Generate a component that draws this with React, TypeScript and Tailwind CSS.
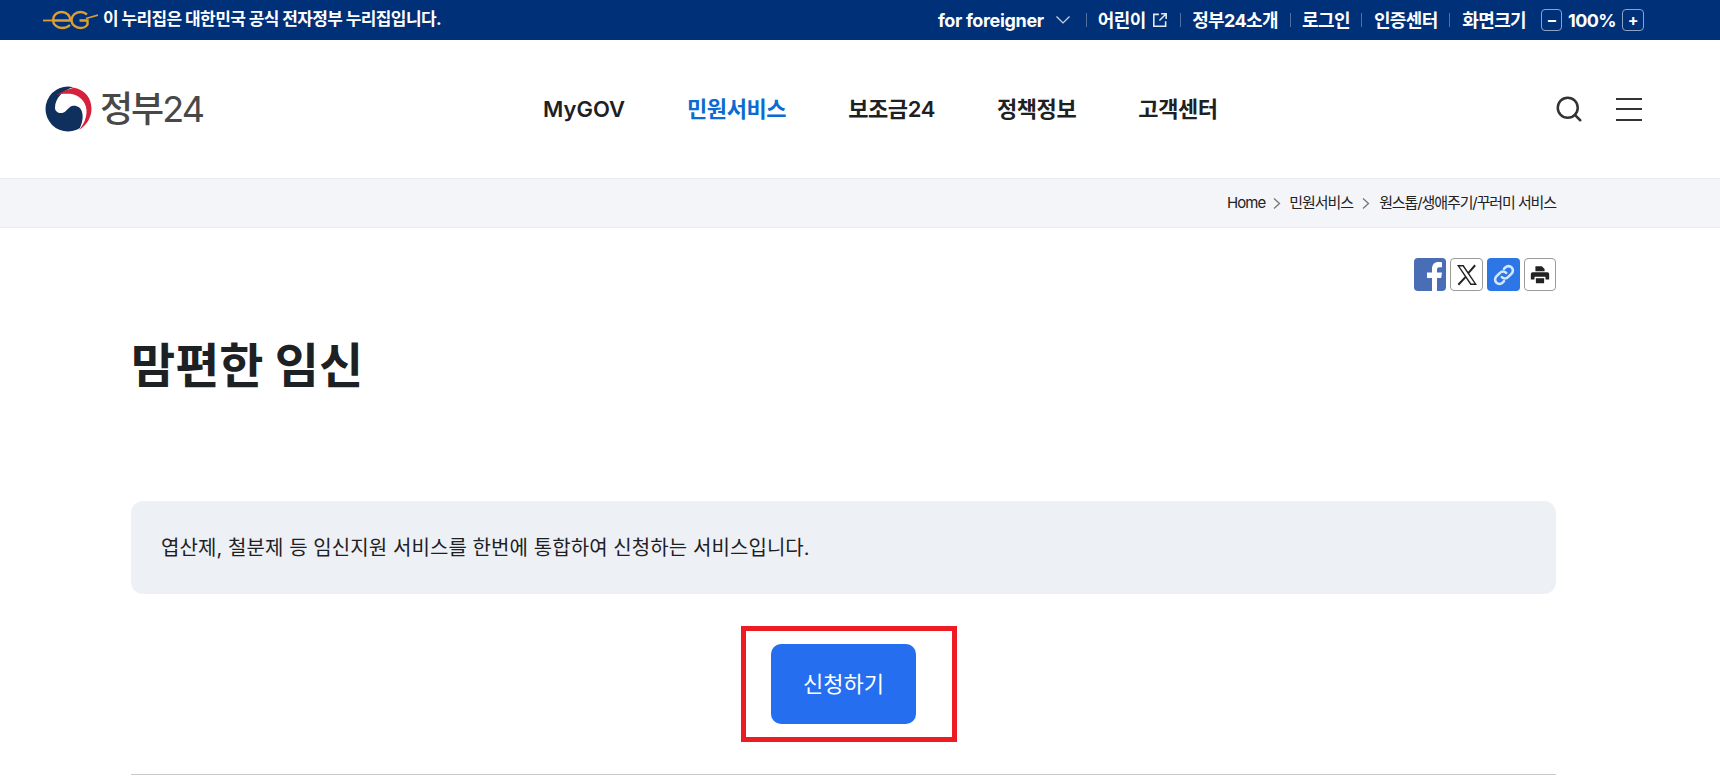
import { Search } from "lucide-react";

const FONT = "font-['Inter','Noto_Sans_CJK_KR',sans-serif]";

const UTIL_LINKS = ["정부24소개", "로그인", "인증센터"];
const NAV_ITEMS = [
  { label: "MyGOV", active: false },
  { label: "민원서비스", active: true },
  { label: "보조금24", active: false },
  { label: "정책정보", active: false },
  { label: "고객센터", active: false },
];

function EgLogo() {
  return (
    <svg width="55" height="20" viewBox="0 0 55 20" fill="none" stroke="#dd9f33" strokeWidth="2.4">
      <path d="M0 10.5h12" strokeWidth="1.8" />
      <path d="M10 10.500h17c.5-5-3.500-8.500-8.500-8.500C13.500 2 10 5.500 10 10s4 8 9 8c3 0 6-1 8-3" />
      <path d="M44 4.500C42 2.800 40 2 37.500 2 32.500 2 28.500 5.500 28.500 10s4 8 9 8c3 0 5.500-1 7-3.500v-4H36.500" />
      <path d="M43 8.500 55 5" strokeWidth="1.800" />
    </svg>
  );
}

function TaegeukLogo() {
  return (
    <svg width="47" height="46" viewBox="0 0 47 46">
      <circle cx="23" cy="23" r="22.500" fill="#0f2f5c" />
      <path d="M10 22C10 12 18 4 29 1L47 0V46H33C36 40 39 33 37 26 36 21 31 19 27 20 23 21 22 26 17 27 13 27.500 10 25 10 22Z" fill="#fff" />
      <path d="M12 9C17 5 23 3.500 29 1.800 40 4 46.500 12 46.500 23 46.500 31 42 39 34 44 39 38 42 31 41.500 24 41 15 33 8.500 25 7.800 20 7.400 16 7.800 12 9Z" fill="#d6213c" />
    </svg>
  );
}

function Chevron({ className }: { className: string }) {
  return (
    <svg className={className} viewBox="0 0 8 12" fill="none" stroke="currentColor" strokeWidth="1.300">
      <path d="M1 1.500 6.500 6.500 1 11.500" />
    </svg>
  );
}

function UtilBar() {
  return (
    <div className="flex h-10 items-center justify-between bg-[#003078] pl-[43px] pr-[76px] font-bold tracking-[-0.6px] text-white">
      <div className="flex items-center gap-[5px] text-[17px]">
        <EgLogo />
        <span>이 누리집은 대한민국 공식 전자정부 누리집입니다.</span>
      </div>
      <div className="flex items-center text-[18px]">
        <span className="tracking-[-0.35px]">for foreigner</span>
        <svg className="ml-[12px] mr-[16px]" width="14" height="8" viewBox="0 0 14 8" fill="none" stroke="#cfd8e8" strokeWidth="1.200">
          <path d="M.5.500 7 7 13.500.5" />
        </svg>
        <div className="h-[14px] w-px bg-[#51709f]" />
        <span className="ml-[11px]">어린이</span>
        <svg className="ml-[5px] mr-[11px]" width="18" height="18" viewBox="0 0 16 16" fill="none" stroke="#e3e8f1" strokeWidth="1.400">
          <path d="M7 3H2.500v10.500H13V9M9 2.500h4.500V7M13.500 2.500 7.500 8.500" />
        </svg>
        {UTIL_LINKS.map((l) => (
          <div key={l} className="flex items-center">
            <div className="h-[14px] w-px bg-[#51709f]" />
            <span className="mx-[11.5px]">{l}</span>
          </div>
        ))}
        <div className="h-[14px] w-px bg-[#51709f]" />
        <span className="ml-[12px]">화면크기</span>
        <button className="ml-[15px] flex h-[22px] w-[21px] items-center justify-center rounded-[4px] border border-[#8ea3c4] text-[16px] leading-none">−</button>
        <span className="ml-[6px]">100%</span>
        <button className="ml-[6px] flex h-[22px] w-[22px] items-center justify-center rounded-[4px] border border-[#8ea3c4] text-[16px] leading-none">+</button>
      </div>
    </div>
  );
}

function Header() {
  return (
    <header className="flex h-[138px] items-center pl-[45px] pr-[78px]">
      <div className="flex w-[498px] items-center gap-[8px]">
        <TaegeukLogo />
        <span className="text-[36px] font-medium leading-none tracking-[-2px] text-[#484848]">
          정부<span className="font-normal">24</span>
        </span>
      </div>
      <nav className="flex items-center gap-[62px] text-[22px] font-semibold tracking-[-0.4px] text-[#1e2124]">
        {NAV_ITEMS.map((n) => (
          <a key={n.label} className={n.active ? "text-[#0b6bd0]" : n.label === "MyGOV" ? "tracking-normal" : ""}>{n.label}</a>
        ))}
      </nav>
      <div className="ml-auto flex items-center gap-[32px]">
        <Search size={30} strokeWidth={2} className="text-[#333333]" />
        <div className="flex h-[23px] w-[26px] flex-col justify-between">
          <div className="h-[2px] bg-[#333333]" />
          <div className="h-[2px] bg-[#333333]" />
          <div className="h-[2px] bg-[#333333]" />
        </div>
      </div>
    </header>
  );
}

function Breadcrumb() {
  return (
    <div className="flex h-[50px] items-center justify-end border-y border-[#e8ebef] bg-[#f4f5f9] pr-[164px] text-[15px] tracking-[-1px] text-[#222222]">
      <span>Home</span>
      <Chevron className="mx-[8px] h-3 w-2 text-[#777777]" />
      <span>민원서비스</span>
      <Chevron className="mx-[9px] h-3 w-2 text-[#777777]" />
      <span className="tracking-[-1.1px]">원스톱/생애주기/꾸러미 서비스</span>
    </div>
  );
}

function ShareIcons() {
  return (
    <div className="flex justify-end gap-[4px]">
      <div className="h-[33px] w-[32px] overflow-hidden rounded-[4px] bg-[#4a6eb5]">
        <svg viewBox="0 0 32 33" width="32" height="33">
          <path d="M18 33V20h-5v-5.500h5V11c0-4.500 2.500-7 6.500-7 1.500 0 2.800.1 3.500.2v5h-2.500c-2 0-2.500 1-2.500 2.500v2.800h5l-.8 5.500h-4.200v13z" fill="#fff" />
        </svg>
      </div>
      <div className="flex h-[33px] w-[33px] items-center justify-center rounded-[4px] border border-[#9a9a9a] bg-white">
        <svg viewBox="0 0 24 24" width="26" height="26" fill="none" stroke="#222222" strokeWidth="1.300">
          <path d="M4 3.500h4.500L20 20.500h-4.500z" />
          <path d="M19.500 3 13 10.500M11 13.500 4 21" strokeWidth="1.800" />
        </svg>
      </div>
      <div className="flex h-[33px] w-[33px] items-center justify-center rounded-[4px] bg-[#2c77e5]">
        <svg viewBox="0 0 24 24" width="26" height="26" fill="none" stroke="#d6e6fb" strokeWidth="2.400" strokeLinecap="round">
          <path d="M10 14a4 4 0 0 0 5.700 0l3.300-3.300a4 4 0 0 0-5.700-5.700l-1.300 1.300" />
          <path d="M14 10a4 4 0 0 0-5.700 0L5 13.300A4 4 0 0 0 10.700 19l1.300-1.300" />
        </svg>
      </div>
      <div className="flex h-[33px] w-[32px] items-center justify-center rounded-[4px] border border-[#9a9a9a] bg-white">
        <svg viewBox="0 0 24 24" width="22" height="22" fill="#222222">
          <path d="M7 2.500h7l3 3V8H7zM4 9h16a2 2 0 0 1 2 2v6h-4v-3H6v3H2v-6a2 2 0 0 1 2-2z" />
          <path d="M7.500 15.500h9V21h-9z" />
        </svg>
      </div>
    </div>
  );
}

export default function App() {
  return (
    <div className={`h-[777px] overflow-hidden bg-white ${FONT}`}>
      <UtilBar />
      <Header />
      <Breadcrumb />
      <main className="mx-[131px] w-[1425px] pt-[30px]">
        <ShareIcons />
        <h1 className="mt-[42px] text-[48px] font-bold leading-[66px] text-[#1e2124]">맘편한 임신</h1>
        <div className="mt-[102px] flex h-[93px] items-center rounded-[12px] bg-[#edf0f5] px-[30px] text-[20px] tracking-[0.08px] text-[#1e2124]">
          엽산제, 철분제 등 임신지원 서비스를 한번에 통합하여 신청하는 서비스입니다.
        </div>
        <div className="mt-[50px] flex justify-center">
          <div className="relative">
            <button className="flex h-[80px] w-[145px] items-center justify-center rounded-[10px] bg-[#256ef0] text-[22px] text-white">
              신청하기
            </button>
            {/* highlight frame drawn over the button */}
            <div className="pointer-events-none absolute -bottom-[18px] -left-[30px] -right-[41px] -top-[18px] border-[5px] border-[#ed1c24]" />
          </div>
        </div>
        <div className="mt-[50px] h-px bg-[#c8c8c8]" />
      </main>
    </div>
  );
}
